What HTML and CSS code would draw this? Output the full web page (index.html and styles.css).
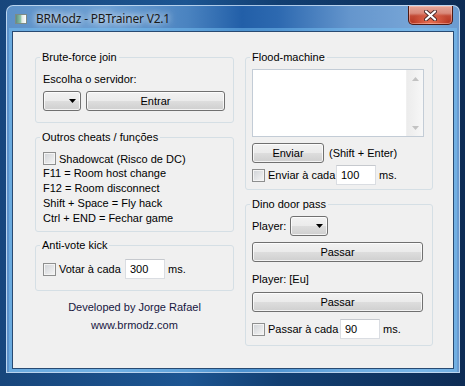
FILE: index.html
```html
<!DOCTYPE html>
<html lang="pt">
<head>
  <meta charset="UTF-8" />
  <title>BRModz - PBTrainer V2.1</title>
  <link rel="stylesheet" href="styles.css">
</head>
<body>

  <div class="window">
    <div class="frame">

      <div class="titlebar">
        <span class="app-icon"></span>
        <span class="title">BRModz - PBTrainer V2.1</span>
        <span class="close">
          <svg width="13" height="11" viewBox="0 0 13 11">
            <path d="M2 1.5 L11 9.5 M11 1.5 L2 9.5" stroke="#4a2a28" stroke-width="4" stroke-linecap="round"/>
            <path d="M2 1.5 L11 9.5 M11 1.5 L2 9.5" stroke="#ffffff" stroke-width="2.2" stroke-linecap="round"/>
          </svg>
        </span>
      </div>

      <div class="client">

        <div class="col col-left">
          <fieldset class="group g-brute">
            <legend>Brute-force join</legend>
            <div class="label">Escolha o servidor:</div>
            <div class="row row-join">
              <div class="combo">
                <svg width="7" height="4" viewBox="0 0 7 4"><polygon points="0,0 7,0 3.5,4" fill="#000"/></svg>
              </div>
              <button class="btn btn-join">Entrar</button>
            </div>
          </fieldset>

          <fieldset class="group g-cheats">
            <legend>Outros cheats / funções</legend>
            <label class="row check-line">
              <input type="checkbox" class="check"> Shadowcat (Risco de DC)
            </label>
            <div class="line">F11 = Room host change</div>
            <div class="line">F12 = Room disconnect</div>
            <div class="line">Shift + Space = Fly hack</div>
            <div class="line">Ctrl + END = Fechar game</div>
          </fieldset>

          <fieldset class="group g-vote">
            <legend>Anti-vote kick</legend>
            <div class="row">
              <label class="check-field w-vote"><input type="checkbox" class="check"> Votar à cada</label>
              <input type="text" class="field" value="300">
              <span class="unit">ms.</span>
            </div>
          </fieldset>

          <div class="credits">
            <div>Developed by Jorge Rafael</div>
            <div>www.brmodz.com</div>
          </div>
        </div>

        <div class="col col-right">
          <fieldset class="group g-flood">
            <legend>Flood-machine</legend>
            <div class="memo">
              <div class="vscroll">
                <span class="arrow"><svg width="7" height="4" viewBox="0 0 7 4"><polygon points="0,4 7,4 3.5,0" fill="#c2c2c2"/></svg></span>
                <span class="arrow"><svg width="7" height="4" viewBox="0 0 7 4"><polygon points="0,0 7,0 3.5,4" fill="#c2c2c2"/></svg></span>
              </div>
            </div>
            <div class="row row-send">
              <button class="btn btn-send">Enviar</button>
              <span>(Shift + Enter)</span>
            </div>
            <div class="row row-repeat">
              <label class="check-field w-flood"><input type="checkbox" class="check"> Enviar à cada</label>
              <input type="text" class="field" value="100">
              <span class="unit">ms.</span>
            </div>
          </fieldset>

          <fieldset class="group g-dino">
            <legend>Dino door pass</legend>
            <div class="row">
              <span class="player-label">Player:</span>
              <div class="combo">
                <svg width="7" height="4" viewBox="0 0 7 4"><polygon points="0,0 7,0 3.5,4" fill="#000"/></svg>
              </div>
            </div>
            <button class="btn btn-pass">Passar</button>
            <div class="label label-eu">Player: [Eu]</div>
            <button class="btn btn-pass">Passar</button>
            <div class="row row-pass">
              <label class="check-field w-pass"><input type="checkbox" class="check"> Passar à cada</label>
              <input type="text" class="field" value="90">
              <span class="unit">ms.</span>
            </div>
          </fieldset>
        </div>

      </div>
    </div>
  </div>

</body>
</html>
```

FILE: styles.css
```css
* {
  box-sizing: border-box;
}

body {
  margin: 0;
  background: #0b2d58;
  font-family: 'Liberation Sans', Arial, sans-serif;
  font-size: 11px;
  color: #000;
}

/* window chrome */
.window {
  width: 465px;
  height: 386px;
  display: flex;
  padding: 5px 5px 13px 6px;
  background: linear-gradient(90deg, #17467c, #1c5592 40%, #123f72 60%, #0d2c55);
}

.frame {
  flex: 1;
  display: flex;
  flex-direction: column;
  padding: 0 6px 4px 6px;
  border: 1px solid rgba(215, 232, 250, 0.75);
  border-radius: 7px 7px 0 0;
  background: linear-gradient(90deg, #5d91c8 0%, #6c9fd3 22%, #4a83c0 40%, #225fa8 52%, #2d69b0 60%, #6596cd 76%, #79a7d8 92%, #6a9bd0 100%);
}

.titlebar {
  height: 26px;
  display: flex;
  align-items: flex-start;
}

.app-icon {
  width: 12px;
  height: 10px;
  margin: 8px 0 0 2px;
  border: 1px solid #7d8a86;
  background: linear-gradient(90deg, #5e8f7e 0%, #8cc2a6 45%, #dfe9e4 60%, #ffffff 100%);
}

.title {
  margin-left: 9px;
  line-height: 26px;
  font-family: 'Noto Sans', 'Open Sans', sans-serif;
  font-size: 12px;
  letter-spacing: -0.2px;
  color: #1a1a1a;
  text-shadow: 0 0 6px rgba(255, 255, 255, 0.95), 0 0 10px rgba(255, 255, 255, 0.8);
}

.close {
  margin-left: auto;
  width: 45px;
  height: 19px;
  display: flex;
  align-items: center;
  justify-content: center;
  border: 1px solid #4d1a14;
  border-top: none;
  border-radius: 0 0 5px 5px;
  background:
    radial-gradient(ellipse at 50% 100%, rgba(240, 120, 90, 0.9), rgba(240, 120, 90, 0) 60%),
    linear-gradient(#e6a697 0%, #d98a7c 40%, #c24a36 55%, #b7341f 100%);
  box-shadow: inset 0 0 0 1px rgba(255, 210, 200, 0.45);
}

.client {
  flex: 1;
  display: flex;
  gap: 11px;
  padding: 18px 20px 0 22px;
  background: #f0f0f0;
  box-shadow: 0 0 0 1px #284a72, 0 0 0 4px rgba(120, 195, 245, 0.5);
}

.col {
  display: flex;
  flex-direction: column;
}

.col-left {
  width: 199px;
}

.col-right {
  width: 188px;
}

/* group boxes */
.group {
  margin: 0;
  min-width: 0;
  padding: 0 8px 0 7px;
  border: 1px solid #d5dfe5;
  border-radius: 3px;
}

.group legend {
  padding: 0 2px;
  margin-left: -3px;
  line-height: 14px;
}

.col-right .group {
  padding-left: 6px;
}

.col-right .group legend {
  margin-left: -2px;
}

.g-brute {
  padding-top: 8px;
  padding-bottom: 11px;
}

.g-cheats {
  margin-top: 7px;
  padding-top: 7px;
  padding-bottom: 5px;
}

.g-vote {
  margin-top: 6px;
  padding-top: 7px;
  padding-bottom: 11px;
}

.g-flood {
  padding-top: 5px;
  padding-bottom: 4px;
}

.g-dino {
  margin-top: 7px;
  padding-top: 5px;
  padding-bottom: 6px;
}

.label {
  line-height: 14px;
}

.row {
  display: flex;
  align-items: center;
}

.row-join {
  margin-top: 5px;
  gap: 5px;
}

.check-line {
  height: 15px;
}

.line {
  line-height: 15px;
}

/* controls */
.btn {
  height: 20px;
  padding: 0;
  border: 1px solid #707070;
  border-radius: 3px;
  background: linear-gradient(#f2f2f2 0%, #ebebeb 48%, #dddddd 52%, #cfcfcf 100%);
  box-shadow: inset 0 0 0 1px rgba(255, 255, 255, 0.75);
  font: inherit;
  color: #000;
}

.btn-join {
  flex: 1;
}

.combo {
  width: 38px;
  height: 20px;
  display: flex;
  align-items: center;
  justify-content: flex-end;
  padding-right: 4px;
  border: 1px solid #707070;
  border-radius: 3px;
  background: linear-gradient(#f2f2f2 0%, #ebebeb 48%, #dddddd 52%, #cfcfcf 100%);
  box-shadow: inset 0 0 0 1px rgba(255, 255, 255, 0.75);
}

.check {
  appearance: none;
  width: 13px;
  height: 13px;
  margin: 0 3px 0 0;
  border: 1px solid #8e8f8f;
  background: linear-gradient(135deg, #cfd2d6, #f6f6f6);
  box-shadow: inset 0 0 0 1px #f4f4f4;
}

.check-field {
  display: flex;
  align-items: center;
}

.w-vote {
  width: 82px;
}

.w-flood {
  width: 84px;
}

.w-pass {
  width: 88px;
}

.field {
  width: 40px;
  height: 20px;
  padding: 0 0 0 4px;
  border: 1px solid #dadde2;
  border-top-color: #c6c9ce;
  background: #fff;
  font: inherit;
  color: #000;
}

.unit {
  margin-left: 3px;
}

.credits {
  margin-top: 7px;
  text-align: center;
  line-height: 18px;
  color: #16163f;
}

/* flood */
.memo {
  height: 68px;
  display: flex;
  justify-content: flex-end;
  border: 1px solid #c3ccd6;
  background: #fff;
}

.vscroll {
  width: 17px;
  display: flex;
  flex-direction: column;
  justify-content: space-between;
  background: linear-gradient(90deg, #ececec, #f7f7f7);
  border-left: 1px solid #f0f0f0;
}

.arrow {
  height: 17px;
  display: flex;
  align-items: center;
  justify-content: center;
}

.row-send {
  margin-top: 6px;
  gap: 5px;
}

.btn-send {
  width: 72px;
}

.row-repeat {
  margin-top: 2px;
}

/* dino */
.player-label {
  width: 38px;
}

.btn-pass {
  width: 171px;
  margin-top: 6px;
}

.label-eu {
  margin-top: 10px;
}

.row-pass {
  margin-top: 7px;
}
```
